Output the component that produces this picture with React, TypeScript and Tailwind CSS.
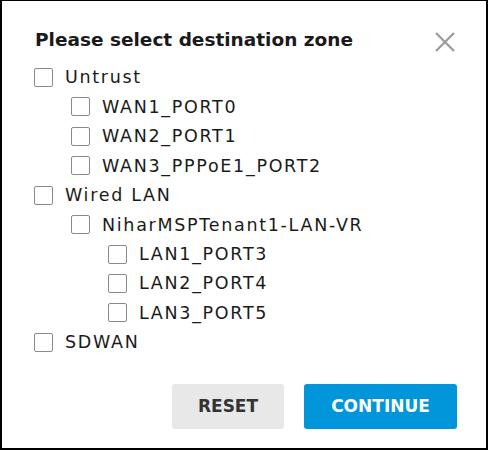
import { useState } from "react"

interface Zone {
    name: string
    level: number
}

const zones: Zone[] = [
    { name: "Untrust", level: 0 },
    { name: "WAN1_PORT0", level: 1 },
    { name: "WAN2_PORT1", level: 1 },
    { name: "WAN3_PPPoE1_PORT2", level: 1 },
    { name: "Wired LAN", level: 0 },
    { name: "NiharMSPTenant1-LAN-VR", level: 1 },
    { name: "LAN1_PORT3", level: 2 },
    { name: "LAN2_PORT4", level: 2 },
    { name: "LAN3_PORT5", level: 2 },
    { name: "SDWAN", level: 0 },
]

const indent = ["pl-0", "pl-[37px]", "pl-[74px]"]

export default function App() {
    const [checked, setChecked] = useState<Record<string, boolean>>({})

    return (
        <div
            className="w-[488px] h-[450px] bg-white border-t border-l-2 border-r-2 border-b-2 border-black flex flex-col text-[#1a1a1a]"
            style={{ fontFamily: '"DejaVu Sans", sans-serif' }}
        >
            <div className="flex items-start justify-between pl-[33px] pr-[30px] pt-[25px]">
                <h2 className="text-[18.5px] font-semibold">Please select destination zone</h2>
                <button className="mt-[5px] text-[#9a9a9a]" aria-label="close">
                    <svg width="22" height="22" viewBox="0 0 22 22" fill="none" stroke="currentColor" strokeWidth="2.2">
                        <path d="M2 2 L20 20 M20 2 L2 20" />
                    </svg>
                </button>
            </div>

            <ul className="mt-[9px] pl-[32px] flex flex-col">
                {zones.map((z) => (
                    <li key={z.name} className={`${indent[z.level]} h-[29.45px] flex items-center`}>
                        <label className="flex items-center gap-[12px] cursor-pointer">
                            <span
                                onClick={() => setChecked({ ...checked, [z.name]: !checked[z.name] })}
                                className="w-[19px] h-[19px] rounded-[2px] border border-[#8a8a8a] bg-white flex items-center justify-center"
                            >
                                {checked[z.name] && (
                                    <svg width="13" height="13" viewBox="0 0 13 13" fill="none" stroke="#0095da" strokeWidth="2">
                                        <path d="M2 7 L5 10 L11 3" />
                                    </svg>
                                )}
                            </span>
                            <span className="text-[17.5px] tracking-[1.7px]">{z.name}</span>
                        </label>
                    </li>
                ))}
            </ul>

            <div className="mt-auto mb-[19px] mr-[29px] flex justify-end gap-[20px]">
                <button className="w-[112px] h-[45px] rounded-[3px] bg-[#e8e8e8] text-[#333] text-[17px] font-semibold">
                    RESET
                </button>
                <button className="w-[153px] h-[45px] rounded-[3px] bg-[#0096d9] text-white text-[17px] font-semibold">
                    CONTINUE
                </button>
            </div>
        </div>
    )
}
